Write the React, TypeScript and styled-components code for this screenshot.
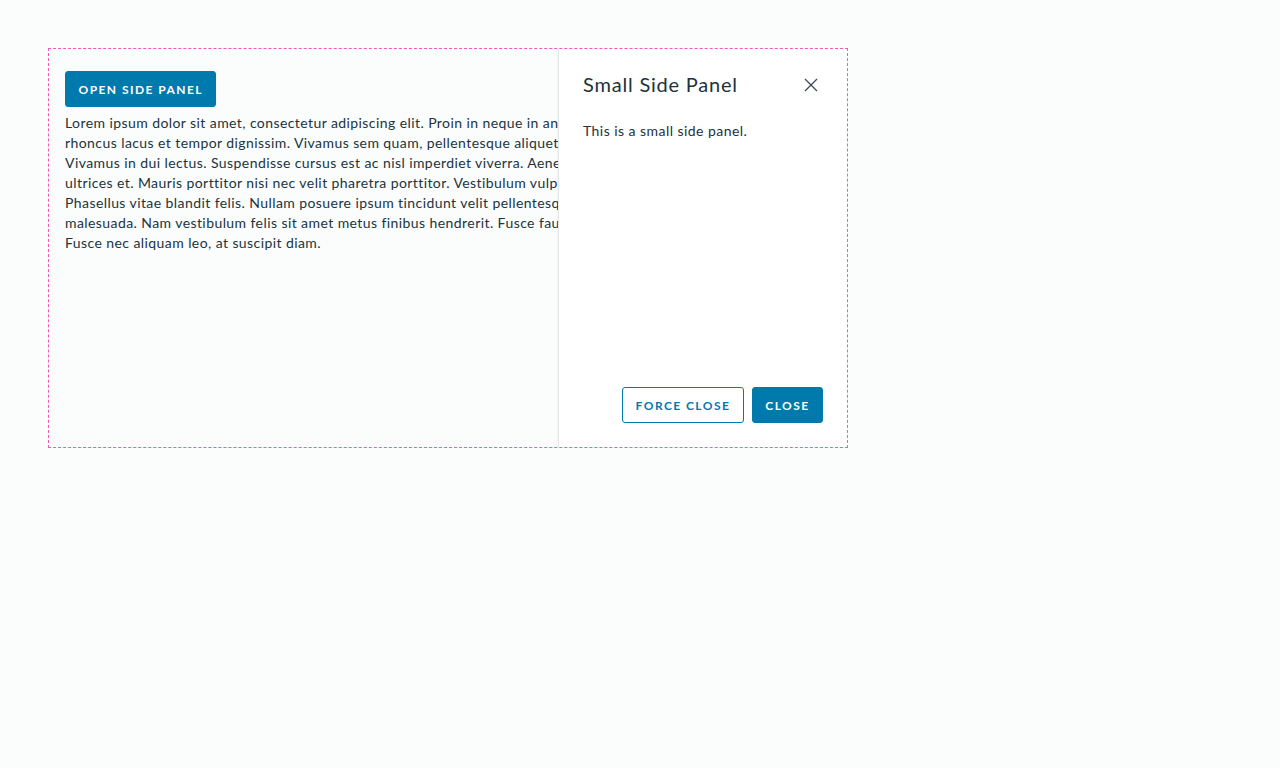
import React from "react";
import styled, { createGlobalStyle } from "styled-components";

const Global = createGlobalStyle`
  html, body { margin: 0; padding: 0; background: #fbfdfd; }
  body { font-family: Lato, "Liberation Sans", sans-serif; color: #21333b; }
`;

const Page = styled.div`
  padding: 48px;
`;

const Frame = styled.div`
  position: relative;
  width: 800px;
  height: 400px;
  box-sizing: border-box;
  border: 1px dashed #f35ab5;
  overflow: hidden;
`;

const Content = styled.div`
  padding: 22px 16px;
  display: flex;
  flex-direction: column;
  align-items: flex-start;
  gap: 6px;
`;

const Button = styled.button<{ $outline?: boolean }>`
  height: 36px;
  padding: 0 12.5px;
  border-radius: 3px;
  border: 1px solid #0079ad;
  background: ${(p) => (p.$outline ? "#ffffff" : "#0079ad")};
  color: ${(p) => (p.$outline ? "#0079ad" : "#ffffff")};
  font-family: Lato, "Liberation Sans", sans-serif;
  font-weight: 700;
  font-size: 12px;
  letter-spacing: 0.12em;
  text-transform: uppercase;
  cursor: pointer;
  white-space: nowrap;
`;

const Paragraph = styled.p`
  margin: 0;
  font-size: 14px;
  line-height: 20px;
  white-space: nowrap;
  letter-spacing: 0.42px;
`;

const Panel = styled.aside`
  position: absolute;
  top: 0;
  right: 0;
  bottom: 0;
  width: 289px;
  box-sizing: border-box;
  background: #ffffff;
  border-left: 1px solid #e3e7e9;
  box-shadow: -1px 0 3px rgba(0, 0, 0, 0.04);
  display: flex;
  flex-direction: column;
  padding: 24px;
`;

const Header = styled.div`
  display: flex;
  align-items: center;
  justify-content: space-between;
  height: 24px;
`;

const Title = styled.h3`
  margin: 0;
  margin-top: -2px;
  font-size: 20px;
  font-weight: 400;
  color: #21333b;
  letter-spacing: 0.8px;
`;

const CloseX = styled.button`
  border: 0;
  background: none;
  padding: 0;
  width: 24px;
  height: 24px;
  display: flex;
  align-items: center;
  justify-content: center;
  color: #3d4a52;
  cursor: pointer;
`;

const Body = styled.div`
  flex: 1;
  padding-top: 24px;
  font-size: 14px;
  line-height: 20px;
  letter-spacing: 0.45px;
`;

const Footer = styled.div`
  display: flex;
  justify-content: flex-end;
  gap: 8px;
`;

const lines = [
  "Lorem ipsum dolor sit amet, consectetur adipiscing elit. Proin in neque in ante placerat mattis id sed quam. Proin",
  "rhoncus lacus et tempor dignissim. Vivamus sem quam, pellentesque aliquet suscipit eget, pellentesque sed arcu.",
  "Vivamus in dui lectus. Suspendisse cursus est ac nisl imperdiet viverra. Aenean sagittis nibh lacus, in eleifend urna",
  "ultrices et. Mauris porttitor nisi nec velit pharetra porttitor. Vestibulum vulputate sollicitudin dolor ut tincidunt.",
  "Phasellus vitae blandit felis. Nullam posuere ipsum tincidunt velit pellentesque rhoncus. Morbi faucibus ut ipsum at",
  "malesuada. Nam vestibulum felis sit amet metus finibus hendrerit. Fusce faucibus odio eget ex vulputate rhoncus.",
  "Fusce nec aliquam leo, at suscipit diam.",
];

export default function App() {
  return (
    <>
      <Global />
      <Page>
        <Frame>
          <Content>
            <Button>Open side panel</Button>
            <Paragraph>
              {lines.map((l, i) => (
                <React.Fragment key={i}>
                  {l}
                  {i < lines.length - 1 && <br />}
                </React.Fragment>
              ))}
            </Paragraph>
          </Content>
          <Panel>
            <Header>
              <Title>Small Side Panel</Title>
              <CloseX aria-label="close">
                <svg width="16" height="16" viewBox="0 0 16 16" fill="none" stroke="currentColor" strokeWidth="1.3">
                  <path d="M2 2 L14 14 M14 2 L2 14" />
                </svg>
              </CloseX>
            </Header>
            <Body>This is a small side panel.</Body>
            <Footer>
              <Button $outline>Force close</Button>
              <Button>Close</Button>
            </Footer>
          </Panel>
        </Frame>
      </Page>
    </>
  );
}
